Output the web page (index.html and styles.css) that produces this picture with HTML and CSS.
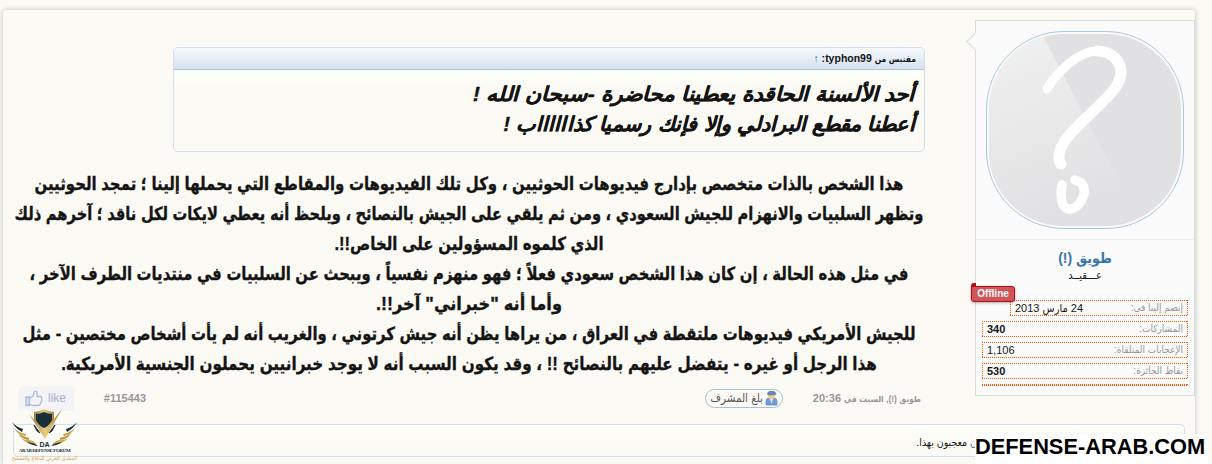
FILE: index.html
```html
<!DOCTYPE html>
<html lang="ar" dir="rtl">
  <head>
    <meta charset="utf-8">
    <title>طويق (!)</title>
    <link rel="stylesheet" href="styles.css">
  </head>
  <body>
    <div class="message">
      <div class="message-main">
        <aside class="user-info">
          <span class="arrow"></span>
          <div class="avatar-holder">
            <div class="avatar">
              <svg width="192" height="192" viewBox="0 0 192 192">
                <defs>
                  <linearGradient id="shine" x1="0" y1="0" x2=".3" y2="1">
                    <stop offset="0" stop-color="#f1f1f1"/>
                    <stop offset="1" stop-color="#e1e1e3"/>
                  </linearGradient>
                </defs>
                <rect width="192" height="192" fill="#e1e1e4"/>
                <path d="M0 0H53L145 177V192H0Z" fill="url(#shine)"/>
                <g fill="none" stroke="#fff" stroke-linecap="round" stroke-linejoin="round">
                  <path d="M108 17C123 17 132 27 132 39C132 64 68 97 70 124Q70 128 72 130" stroke-width="11"/>
                  <path d="M58 55C69 36 91 17 108 17" stroke-width="9"/>
                  <path d="M73 151C70 168 75 175 81 175C89 175 97 162 95 154C94 149 90 147 86 146" stroke-width="9.500"/>
                </g>
              </svg>
            </div>
          </div>
          <h3 class="user-text"><a class="username">طويق (!)</a><em class="user-title">عـــقيــد</em></h3>
          <span class="offline">Offline</span>
          <div class="extra">
            <dl class="joined"><dt>إنضم إلينا في:</dt><dd>24 مارس 2013</dd></dl>
            <dl><dt>المشاركات:</dt><dd><b>340</b></dd></dl>
            <dl><dt>الإعجابات المتلقاة:</dt><dd>1,106</dd></dl>
            <dl><dt>نقاط الجائزة:</dt><dd><b>530</b></dd></dl>
            <dl class="empty"></dl>
          </div>
        </aside>

        <div class="message-info">
          <div class="quote">
            <div class="quote-author"><small>مقتبس من</small> typhon99: <a>↑</a></div>
            <div class="quote-text">
              <p class="q1">أحد الألسنة الحاقدة يعطينا محاضرة -سبحان الله !</p>
              <p class="q2">أعطنا مقطع البرادلي وإلا فإنك رسميا كذااااااب !</p>
            </div>
          </div>
          <div class="message-text">
            <p class="l1">هذا الشخص بالذات متخصص بإدارج فيديوهات الحوثيين ، وكل تلك الفيديوهات والمقاطع التي يحملها إلينا ؛ تمجد الحوثيين</p>
            <p class="l2">وتظهر السلبيات والانهزام للجيش السعودي ، ومن ثم يلقي على الجيش بالنصائح ، ويلحظ أنه يعطي لايكات لكل ناقد ؛ آخرهم ذلك</p>
            <p class="l3">الذي كلموه المسؤولين على الخاص!!.</p>
            <p class="l4">في مثل هذه الحالة ، إن كان هذا الشخص سعودي فعلاً ؛ فهو منهزم نفسياً ، ويبحث عن السلبيات في منتديات الطرف الآخر ،</p>
            <p class="l5">وأما أنه "خبراني" آخر!!.</p>
            <p class="l6">للجيش الأمريكي فيديوهات ملتقطة في العراق ، من يراها يظن أنه جيش كرتوني ، والغريب أنه لم يأت أشخاص مختصين - مثل</p>
            <p class="l7">هذا الرجل أو غيره - يتفضل عليهم بالنصائح !! ، وقد يكون السبب أنه لا يوجد خبرانيين يحملون الجنسية الأمريكية.</p>
          </div>
          <div class="message-meta">
            <span class="date"><small>طويق (!), السبت في</small> 20:36</span>
            <a class="report">
              <svg width="13" height="16" viewBox="0 0 13 16">
                <path d="M1 15V11Q1 8 5 8H8Q12 8 12 11V15Z" fill="#6f9be3" stroke="#5f82c0" stroke-width=".7"/>
                <circle cx="6.500" cy="6" r="3.300" fill="#f3c58b"/>
                <path d="M2 4Q3 .7 6.500 .7T11.500 4L10 5.200H3Z" fill="#6687ba"/>
                <path d="M5 9L6.500 14 8 9Z" fill="#e9edf8"/>
              </svg>
              <span>بلغ المشرف</span>
            </a>
            <a class="number">#115443</a>
            <a class="like">
              <svg width="18" height="17" viewBox="0 0 18 17" fill="none" stroke="#a9b9dc" stroke-width="1.300" stroke-linejoin="round">
                <path d="M1 7H4.500V15.500H1Z" fill="#d5ddef"/>
                <path d="M5 8C8 7 9 5 9 2.500C9 .5 12 .5 12 3V6.500H15.500Q17.500 7 16.500 9Q17.500 10.500 16 11.500Q16.500 13 15 14Q15 15.500 13 15.500H8L5 14.500"/>
              </svg>
              <span>like</span>
            </a>
          </div>
        </div>
      </div>
      <div class="likes-summary"><span><a>ن</a> معجبون بهذا.</span></div>
    </div>

    <div class="forum-logo">
      <svg width="68" height="38" viewBox="0 0 68 38">
        <defs>
          <linearGradient id="gold" x1="0" x2="1">
            <stop offset="0" stop-color="#a07c3c"/>
            <stop offset=".5" stop-color="#e6cd7c"/>
            <stop offset="1" stop-color="#a87c38"/>
          </linearGradient>
        </defs>
        <path d="M23 3Q28 3 33 0Q38 3 43 3V12Q40 19 33 22Q26 19 23 12Z" fill="url(#gold)"/>
        <path d="M25 5Q29 5 33 3Q37 5 41 5V11Q39 16 33 19Q27 16 25 11Z" fill="#172e3b"/>
        <path d="M18 5L33 22.500 51 0 34 30Z" fill="url(#gold)"/>
        <path d="M23 16L29 24 26 22ZM44 16L38 24 41 22Z" fill="#172e3b" stroke="#172e3b" stroke-width="1"/>
        <g id="wing">
          <path d="M1 13Q4 19 11 23L12 20Q5 18 1 13Z" fill="#172e3b"/>
          <path d="M3 19Q6 25 14 27L15 25Q8 24 3 19Z" fill="#c79c48"/>
          <path d="M7 24Q10 30 18 31V29Q12 28 7 24Z" fill="#bd9445"/>
          <path d="M10 29Q15 35 26 36Q23 31 17 31Q13 31 10 29Z" fill="#d1a74f"/>
          <path d="M16 33Q20 36 27 37Q24 34 16 33Z" fill="#172e3b"/>
        </g>
        <use href="#wing" transform="matrix(-1 0 0 1 67 0)"/>
        <text x="33.500" y="38" text-anchor="middle" class="logo-da">DA</text>
      </svg>
      <span class="logo-en">ARAB DEFENSE FORUM</span>
      <span class="logo-ar">المنتدى العربي للدفاع والتسليح</span>
    </div>
    <div class="watermark">DEFENSE-ARAB.COM</div>
  </body>
</html>
```

FILE: styles.css
```css
* {
  box-sizing: border-box;
  margin: 0;
  padding: 0;
}
html,
body {
  height: 464px;
  overflow: hidden;
}
body {
  position: relative;
  background: #fcfaf5;
  color: #141414;
  font: 11px "Liberation Sans", "DejaVu Sans Condensed", "DejaVu Sans", sans-serif;
  padding: 10px 17px 0 3px;
}
.message {
  height: 454px;
  background: #fcfaf5;
  border-radius: 3px 3px 0 0;
  box-shadow: 0 0 4px 1px #cfd0cd;
}
.message-main {
  display: flex;
  height: 414px;
  padding-top: 10px;
}

/* user column */
.user-info {
  position: relative;
  width: 220px;
  height: 376px;
  background: #fbfbfb;
  border: 1px solid #d8dadb;
}
.arrow {
  position: absolute;
  top: 14px;
  left: -7px;
  width: 13px;
  height: 13px;
  background: #fbfbfb;
  border: solid #d8dadb;
  border-width: 0 0 1px 1px;
  transform: rotate(45deg);
}
.avatar-holder {
  height: 219px;
  padding: 10px;
  border-bottom: 1px solid #eee;
}
.avatar {
  width: 198px;
  height: 198px;
  padding: 2px;
  background: #fcfaf5;
  border: 1px solid #a5cae4;
  border-radius: 78px;
}
.avatar svg {
  display: block;
  border-radius: 75px;
}
.user-text {
  padding-top: 8px;
  text-align: center;
  font-weight: normal;
}
.username {
  display: block;
  height: 20px;
  color: #3876a8;
  font-size: 14px;
  font-weight: bold;
  line-height: 20px;
}
.user-title {
  display: block;
  height: 14px;
  font-size: 11px;
  font-style: normal;
  line-height: 14px;
}
.offline {
  position: absolute;
  top: 265px;
  left: -5px;
  width: 44px;
  height: 16px;
  background: #cf5558;
  border: 1px solid #bb0b10;
  border-radius: 0 3px 3px 3px;
  box-shadow: 0 1px 3px rgba(0, 0, 0, .3);
  color: #fff;
  font-size: 10px;
  font-weight: bold;
  line-height: 14px;
  text-align: center;
}
.offline::before {
  content: "";
  position: absolute;
  top: -4px;
  left: -1px;
  width: 5px;
  height: 4px;
  background: #bb0b10;
  border-radius: 3px 0 0 0;
}
.extra {
  padding: 18px 6px 0;
}
.extra dl {
  display: flex;
  justify-content: space-between;
  height: 16px;
  margin-bottom: 5px;
  padding: 1px 5px;
  background:
    repeating-linear-gradient(90deg, #ff5200 0 1px, transparent 1px 2px) top / 100% 1px no-repeat,
    repeating-linear-gradient(90deg, #ff5200 0 1px, transparent 1px 2px) bottom / 100% 1px no-repeat,
    repeating-linear-gradient(#ff5200 0 1px, transparent 1px 2px) left / 1px 100% no-repeat,
    repeating-linear-gradient(#ff5200 0 1px, transparent 1px 2px) right / 1px 100% no-repeat;
  line-height: 14px;
}
.extra dt {
  color: #969696;
  font-size: 10px;
}
.extra dl.joined {
  width: 178px;
}
.extra dl.empty {
  height: 2px;
}

/* post */
.message-info {
  width: 912px;
  margin-right: 50px;
}
.quote {
  width: 752px;
  height: 105px;
  margin-top: 27px;
  border: 1px solid #d3dfee;
  border-radius: 5px;
  background: linear-gradient(#fdfffa, #fcfaf5) 0 22px / 100% 18px no-repeat;
  overflow: hidden;
}
.quote-author {
  height: 22px;
  padding-right: 8px;
  background: linear-gradient(#f6f9fd, #d6e2ef);
  border-bottom: 1px solid #adc3de;
  font-size: 10.5px;
  font-weight: bold;
  line-height: 21px;
}
.quote-author small {
  font-size: 8.5px;
}
.quote-author a {
  color: #3876a8;
}
.quote-text {
  padding: 9px 9px 0;
  font-size: 20px;
  font-style: italic;
  font-weight: bold;
  line-height: 30px;
  white-space: nowrap;
  -webkit-text-stroke: .3px #141414;
}
.quote-text p {
  transform-origin: right;
}
.q1 {
  transform: scaleX(1.094);
}
.q2 {
  transform: scaleX(1.033);
}
.message-text {
  height: 216px;
  margin-top: 17px;
  font-size: 18px;
  font-weight: bold;
  line-height: 30px;
  white-space: nowrap;
  -webkit-text-stroke: .3px #141414;
}
.message-text p {
  display: flex;
  height: 30px;
  justify-content: center;
}
.l1 {
  transform: scaleX(.922);
}
.l2 {
  transform: scaleX(.907);
}
.l3 {
  transform: scaleX(.925);
}
.l4 {
  transform: scaleX(.916);
}
.l6 {
  transform: scaleX(.918);
}
.l7 {
  transform: scaleX(.938);
}
.message-meta {
  display: flex;
  align-items: center;
  height: 26px;
}
.date {
  width: 142px;
  padding-right: 4px;
  color: #969696;
  font-weight: bold;
  white-space: nowrap;
}
.date small {
  font-size: 8.5px;
}
.report {
  display: flex;
  align-items: center;
  gap: 2px;
  width: 78px;
  height: 19px;
  padding-right: 4px;
  border: 1px solid #a5c4d4;
  border-radius: 10px;
  color: #555;
  font-size: 11.5px;
  white-space: nowrap;
}
.number {
  width: 43px;
  margin-right: 559px;
  color: #969696;
  font-weight: bold;
}
.like {
  display: flex;
  align-items: center;
  direction: ltr;
  gap: 5px;
  width: 56px;
  height: 25px;
  margin-right: 29px;
  padding-left: 7px;
  background: #f4f4f6;
  border-radius: 6px 2px 2px 2px;
  color: #a5b1d2;
  font-size: 12px;
}
.likes-summary {
  width: 1172px;
  height: 33px;
  margin-right: 10px;
  padding-right: 207px;
  background: linear-gradient(#fdfffa, #fcfaf5 60%);
  border: 1px solid #d3dfee;
  border-radius: 5px;
  font-size: 10.5px;
  line-height: 34px;
}
.likes-summary a {
  color: #3876a8;
}

/* overlays */
.forum-logo {
  position: absolute;
  top: 409px;
  left: 10px;
  width: 69px;
  height: 54px;
  text-align: center;
}
.forum-logo svg,
.forum-logo span {
  display: block;
}
.logo-da {
  fill: #172e3b;
  font: bold 7px "Liberation Sans", sans-serif;
}
.logo-en {
  color: #172e3b;
  direction: ltr;
  font: bold 5px/8px "Liberation Serif", serif;
  letter-spacing: -.4px;
  white-space: nowrap;
}
.logo-ar {
  color: #d4a656;
  font-size: 5.7px;
  line-height: 7px;
  white-space: nowrap;
}
.watermark {
  position: absolute;
  top: 434px;
  left: 975px;
  width: 233px;
  height: 30px;
  background: #fff;
  color: #000;
  direction: ltr;
  font-size: 21.8px;
  font-weight: bold;
  line-height: 25px;
  white-space: nowrap;
}
```
